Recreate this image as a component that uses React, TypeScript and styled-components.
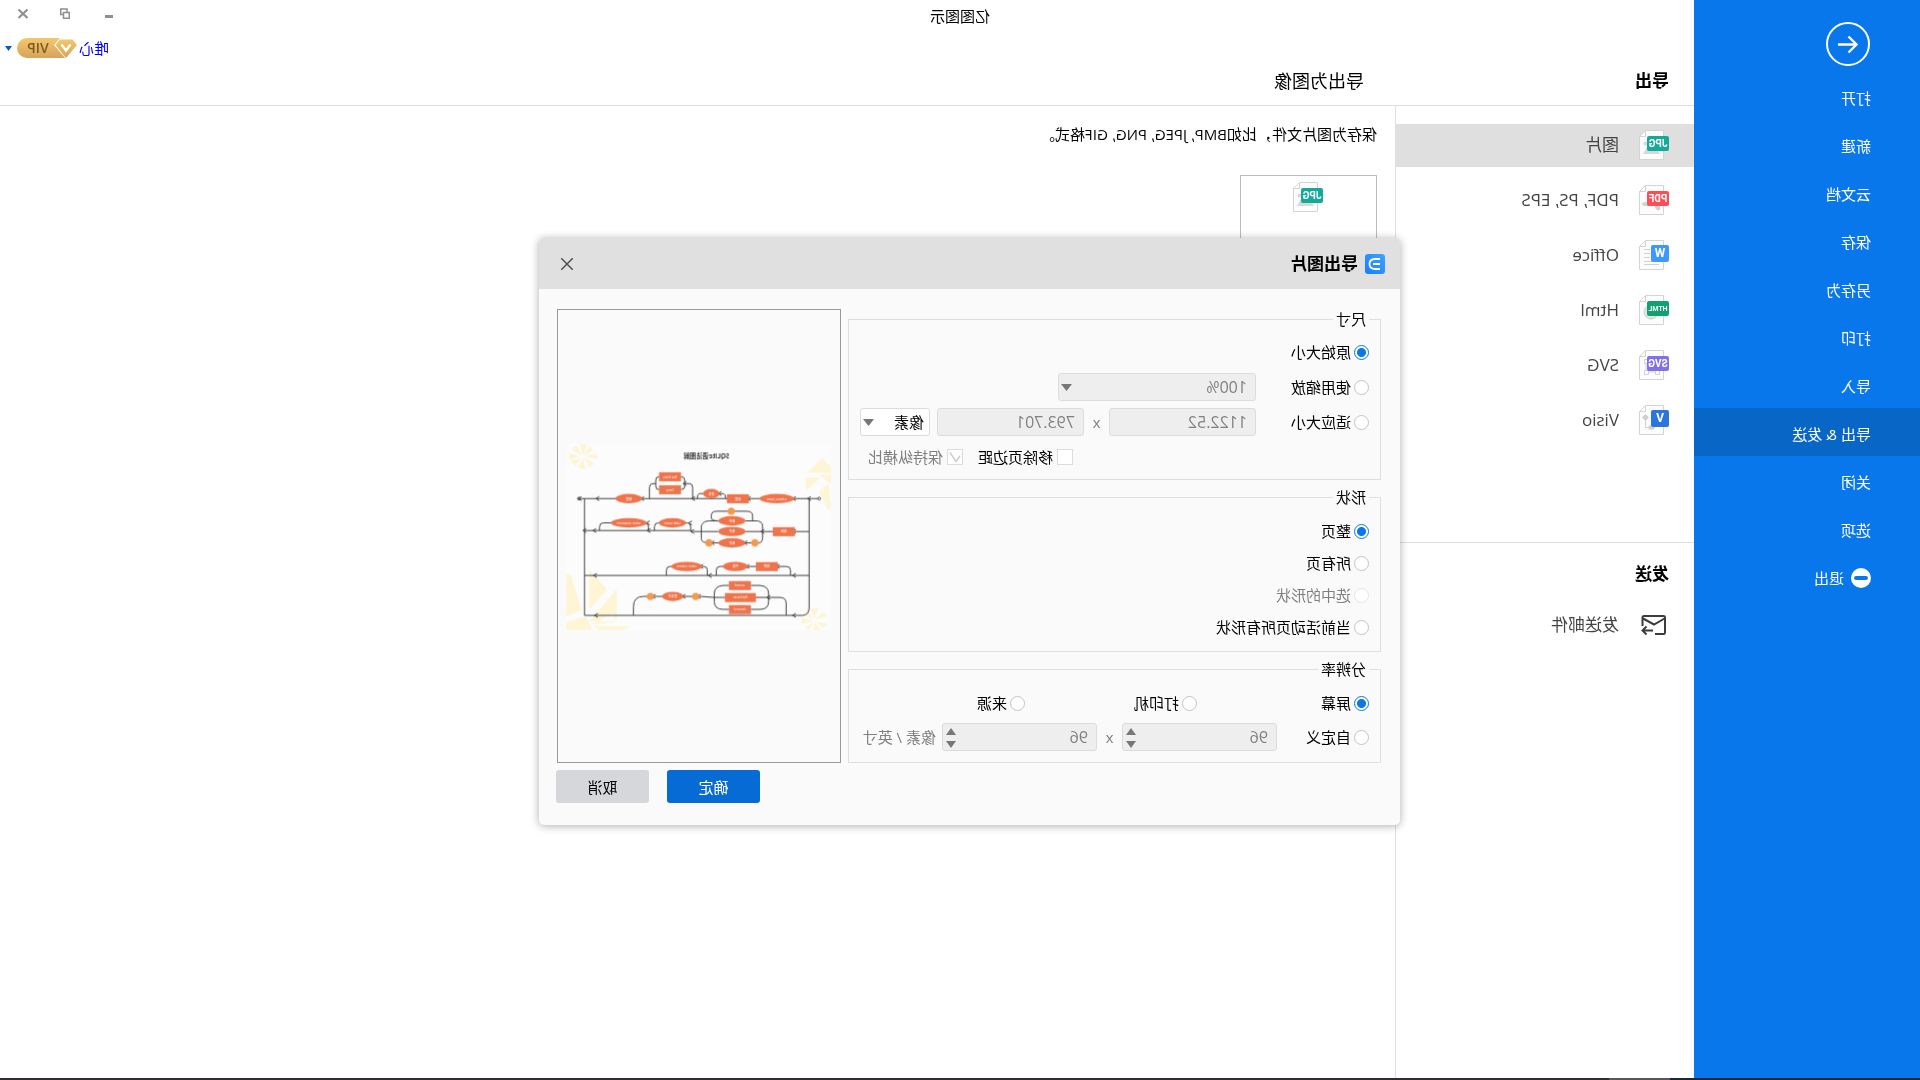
import React from "react";
import styled, { createGlobalStyle, css } from "styled-components";

const GlobalStyle = createGlobalStyle`
  *, *::before, *::after { box-sizing: border-box; }
  body {
    margin: 0;
    background: #ffffff;
    overflow: hidden;
    font-family: "Open Sans", "Noto Sans CJK SC", sans-serif;
    font-size: 15px;
    color: #000000;
  }
  button, input, select { font: inherit; color: inherit; margin: 0; }
`;

const Window = styled.div`
  position: relative;
  display: flex;
  flex-direction: column;
  min-height: 100vh;
  transform: scaleX(-1);
`;

const Workspace = styled.div`
  flex: 1;
  display: flex;
`;

/* ---------- sidebar ---------- */

const Sidebar = styled.nav`
  flex: 0 0 226px;
  background: #0977ec;
  color: #ffffff;
`;

const BackButton = styled.button`
  display: block;
  margin: 22px 0 6px 50px;
  width: 44px;
  height: 44px;
  padding: 0;
  border: 0;
  background: none;
`;

const MenuItem = styled.button<{ $active?: boolean }>`
  display: flex;
  align-items: center;
  gap: 7px;
  width: 100%;
  height: 48px;
  padding: 4px 0 0 49px;
  border: 0;
  background: ${(p) => (p.$active ? "#0866c6" : "transparent")};
  text-align: left;
  line-height: 20px;
`;

/* ---------- header ---------- */

const Content = styled.div`
  flex: 1;
  min-width: 0;
  display: flex;
  flex-direction: column;
`;

const Header = styled.header`
  border-bottom: 1px solid #dfdfdf;
`;

const TitleBar = styled.div`
  display: flex;
  align-items: center;
  height: 32px;
  padding-left: calc(50vw - 256px);
  padding-right: 18px;
  padding-bottom: 2px;
`;

const WindowControls = styled.div`
  display: flex;
  gap: 32px;
  margin-left: auto;
  padding-bottom: 4px;
`;

const IconButton = styled.button`
  display: flex;
  padding: 0;
  border: 0;
  background: none;
`;

const AccountBar = styled.div`
  display: flex;
  align-items: center;
  justify-content: flex-end;
  gap: 2px;
  height: 32px;
  padding-right: 5px;
`;

const AccountLink = styled.a`
  color: #0000ff;
  text-decoration: none;
  line-height: 20px;
`;

const DropButton = styled(IconButton)`
  margin-left: 3px;
`;

const Headings = styled.div`
  display: flex;
  align-items: center;
  height: 41px;
  padding-bottom: 8px;
`;

const SectionTitle = styled.h2`
  margin: 0;
  padding-left: 25px;
  font-size: 17px;
  font-weight: 700;
  line-height: 26px;
`;

const HeadingSlot = styled.div`
  flex: 0 0 330px;
`;

const PageTitle = styled.h1`
  margin: 0;
  font-size: 18px;
  font-weight: 400;
  line-height: 26px;
`;

/* ---------- export list ---------- */

const Columns = styled.div`
  flex: 1;
  display: flex;
`;

const ExportNav = styled.div`
  flex: 0 0 299px;
  padding-top: 18px;
  border-right: 1px solid #dfdfdf;
`;

const FormatList = styled.div`
  display: flex;
  flex-direction: column;
  gap: 12px;
`;

const FormatItem = styled.button<{ $active?: boolean }>`
  display: flex;
  align-items: center;
  gap: 20px;
  width: 100%;
  height: 43px;
  padding: 0 0 1px 25px;
  border: 0;
  background: ${(p) => (p.$active ? "#dfdfdf" : "transparent")};
  color: #444444;
  font-size: 17px;
  line-height: 24px;
`;

const SendSection = styled.section`
  display: flex;
  flex-direction: column;
  gap: 17px;
  margin-top: 100px;
  padding-top: 18px;
  border-top: 1px solid #dfdfdf;
`;

const Main = styled.main`
  flex: 1;
  padding: 17px 18px;
`;

const Description = styled.p`
  margin: 0 0 30px;
  line-height: 22px;
`;

const FormatCard = styled.button`
  display: flex;
  flex-direction: column;
  align-items: center;
  width: 137px;
  height: 137px;
  padding: 6px 0;
  border: 1px solid #bbbbbb;
  background: #ffffff;
`;

/* ---------- dialog ---------- */

const Overlay = styled.div`
  position: absolute;
  inset: 0;
  display: flex;
  align-items: center;
  justify-content: center;
  padding: 0 19px 17px 0;
`;

const Dialog = styled.section`
  width: 861px;
  border-radius: 5px;
  overflow: hidden;
  background: #fafafa;
  box-shadow: 0 1px 8px rgba(0, 0, 0, 0.32);
`;

const DialogHeader = styled.header`
  display: flex;
  align-items: center;
  gap: 7px;
  height: 51px;
  padding: 0 22px 0 15px;
  background: #e0e0e0;
`;

const DialogTitle = styled.h2`
  margin: 0 auto 0 0;
  font-size: 17px;
  line-height: 24px;
`;

const DialogBody = styled.div`
  display: flex;
  gap: 7px;
  padding: 20px 18px 7px 19px;
`;

const Settings = styled.form`
  flex: 1;
  min-width: 0;
  display: flex;
  flex-direction: column;
  gap: 7px;
`;

const Group = styled.fieldset<{ $gap: number; $top: number; $bottom: number }>`
  margin: 0;
  padding: ${(p) => p.$top}px 11px ${(p) => p.$bottom}px;
  border: 1px solid #dfdfdf;
  min-width: 0;

  & > div + div { margin-top: ${(p) => p.$gap}px; }
`;

const Legend = styled.legend`
  padding: 0 3px;
  line-height: 20px;
`;

const Row = styled.div`
  display: flex;
  align-items: center;
  height: 28px;
`;

const Choice = styled.label<{ $width?: number; $muted?: boolean }>`
  display: flex;
  align-items: center;
  gap: 3px;
  flex: 0 0 ${(p) => (p.$width ? p.$width + "px" : "auto")};
  color: ${(p) => (p.$muted ? "#808080" : "#000000")};
  line-height: 20px;
  white-space: nowrap;
`;

const Radio = styled.input`
  appearance: none;
  width: 15px;
  height: 15px;
  border: 1px solid #c4c4c4;
  border-radius: 50%;
  background: #ffffff;

  &:checked {
    border-color: #0977ec;
    background: radial-gradient(circle, #0977ec 4px, #ffffff 5px);
  }
  &:disabled { border-color: #e4e4e4; }
`;

const CheckRow = styled(Row)`
  gap: 15px;
  padding-left: 296px;
`;

const CheckBox = styled.input`
  appearance: none;
  width: 16px;
  height: 16px;
  border: 1px solid #dcdcdf;
  background: #ffffff;
`;

const CheckSlot = styled.span`
  position: relative;
  display: flex;
  margin-right: 1px;

  & svg { position: absolute; left: 2px; top: 2px; pointer-events: none; }
`;

const field = css`
  width: 100%;
  height: 28px;
  padding: 0 8px;
  border: 1px solid #dcdcdf;
  border-radius: 3px;
  appearance: none;
  background: #eeeeee;
  color: #808080;
  font-size: 16px;
  opacity: 1;
  outline: none;
`;

const TextField = styled.input`
  ${field}
`;

const SelectField = styled.select<{ $white?: boolean }>`
  ${field}
  ${(p) => p.$white && "background: #ffffff; color: #000000; padding: 0 5px; font-size: 15px;"}
`;

const FieldSlot = styled.div<{ $width: number }>`
  position: relative;
  display: flex;
  flex: 0 0 ${(p) => p.$width}px;
`;

const Caret = styled.span`
  position: absolute;
  right: 3px;
  top: 11px;
  display: flex;
  pointer-events: none;
`;

const Steppers = styled.div`
  position: absolute;
  right: 4px;
  top: 5px;
  display: flex;
  flex-direction: column;
  gap: 6px;
`;

const Times = styled.span`
  flex: 0 0 25px;
  text-align: center;
  color: #808080;
  line-height: 20px;
`;

const UnitSlot = styled(FieldSlot)`
  margin-left: 7px;
`;

const UnitText = styled.span`
  margin-left: 6px;
  color: #808080;
  line-height: 20px;
  white-space: nowrap;
`;

const Preview = styled.div`
  flex: 0 0 284px;
  display: flex;
  align-items: center;
  justify-content: center;
  border: 1px solid #999999;
`;

const DialogFooter = styled.footer`
  display: flex;
  justify-content: flex-end;
  gap: 18px;
  padding: 0 17px 22px;
`;

const ActionButton = styled.button<{ $primary?: boolean }>`
  width: 93px;
  height: 33px;
  padding: 0;
  border: 0;
  border-radius: 3px;
  background: ${(p) => (p.$primary ? "#066bd5" : "#d5d7db")};
  color: ${(p) => (p.$primary ? "#ffffff" : "#000000")};
`;

const TaskStrip = styled.div`
  display: grid;
  grid-template-columns: 250px 61px 1fr;
  height: 2px;
  background: #302e30;

  & span:first-child { background: #1c2a36; }
  & span:nth-child(2) { background: #5a5658; }
`;

/* ---------- drawings ---------- */

type Kind = "JPG" | "PDF" | "W" | "HTML" | "SVG" | "V";

const badgeColor: Record<Kind, string> = {
  JPG: "#12ab9b",
  PDF: "#ff4d55",
  W: "#3f98ff",
  HTML: "#11a170",
  SVG: "#8370e8",
  V: "#2b76dc",
};

function FileIcon({ kind }: { kind: Kind }) {
  const single = kind.length === 1;
  return (
    <svg width="30" height="30" viewBox="0 0 30 30" aria-hidden="true">
      <path d="M5.5 .5H23.5L29.5 6.5V29.5H5.5Z" fill="#fcfcfc" stroke="#d4d4d4" />
      <path d="M23.5 .5V6.5H29.5" fill="none" stroke="#d4d4d4" />
      {kind === "JPG" && (
        <g fill="#d8d8d8">
          <path d="M9 24L15 15L19 20L22 17L26 24Z" />
          <circle cx="23.500" cy="13.500" r="2" />
        </g>
      )}
      {kind === "PDF" && (
        <g fill="#d2d2d2">
          <ellipse cx="11.500" cy="22" rx="2.500" ry="3.500" transform="rotate(30 11.500 22)" />
          <ellipse cx="23.500" cy="19" rx="3.500" ry="2" />
        </g>
      )}
      {kind === "W" && (
        <path d="M19 9.500H25M19 13.500H25M19 17.500H25M10 21.500H25M10 24.500H25" stroke="#d0d0d0" fill="none" />
      )}
      {kind === "HTML" && <circle cx="18" cy="17" r="7" fill="#e4e4e4" stroke="#cfcfcf" />}
      {kind === "SVG" && (
        <g fill="#fcfcfc" stroke="#d0d0d0">
          <path d="M11 11H23V22H11Z" />
          <path d="M9.500 20.500h4v4h-4zM20.500 20.500h4v4h-4zM20.500 9.500h4v4h-4z" />
        </g>
      )}
      {kind === "V" && (
        <g stroke="#d0d0d0" fill="#d0d0d0">
          <path d="M23.500 13V22.500H16" fill="none" />
          <path d="M23.500 9.500L26.500 12.500L23.500 15.500L20.500 12.500ZM15 21h5v3h-5z" />
        </g>
      )}
      <rect x="0" y={single ? 5 : 6} width={single ? 18 : 22} height={single ? 17 : 15} rx="2" fill={badgeColor[kind]} />
      <text
        x={single ? 9 : 11}
        y={kind === "HTML" ? 16 : 17}
        fill="#ffffff"
        fontFamily="Roboto, sans-serif"
        fontWeight="700"
        fontSize={single ? 12 : kind === "HTML" ? 7 : 10}
        textAnchor="middle"
      >
        {kind}
      </text>
    </svg>
  );
}

function MailIcon() {
  return (
    <svg width="30" height="22" viewBox="0 0 30 22" fill="none" stroke="#3c3c3c" strokeWidth="2" aria-hidden="true">
      <path d="M14 20H5.500Q4 20 4 18.500V3.500Q4 2 5.500 2H25Q26.500 2 26.500 3.500V12" />
      <path d="M4.500 4.500L15 10.500L26 4.500" />
      <path d="M16 16.500H26M22.500 12.500L26.500 16.500L22.500 20.500" />
    </svg>
  );
}

function Triangle({ up, color = "#777777", size = 11 }: { up?: boolean; color?: string; size?: number }) {
  return (
    <svg width={size} height={size > 8 ? 7 : 5} viewBox="0 0 11 7" preserveAspectRatio="none" aria-hidden="true">
      <path d={up ? "M5.500 0L11 7H0Z" : "M0 0H11L5.500 7Z"} fill={color} />
    </svg>
  );
}

function VipBadge() {
  return (
    <svg width="60" height="20" viewBox="0 0 60 20" role="img" aria-label="VIP">
      <defs>
        <linearGradient id="gold" x1="0" y1="0" x2="0" y2="1">
          <stop offset="0" stopColor="#f3c86c" />
          <stop offset="1" stopColor="#d7a35a" />
        </linearGradient>
      </defs>
      <path d="M12 0H50A10 10 0 0 1 50 20H12Z" fill="url(#gold)" />
      <path d="M5 0H17L23 7L11.500 20.500L-1 7Z" fill="#ffffff" />
      <path d="M4.500 1.500H17L21.500 7L11 20L0 7Z" fill="url(#gold)" />
      <path d="M6.500 6.500L11 12.500L15.500 6.500" fill="none" stroke="#ffffff" strokeWidth="2.400" />
      <text x="39" y="15" textAnchor="middle" fontFamily="Open Sans, sans-serif" fontSize="14" fontWeight="600" fill="#7d5a20">
        VIP
      </text>
    </svg>
  );
}

const ellipses: [number, number, number, string][] = [
  [189, 205, 52, "schema_name"],
  [386, 190, 25, "表名"],
  [634, 205, 40, "触发"],
  [324, 272, 41, "条件"],
  [324, 304, 41, "条件"],
  [324, 338, 41, "条件"],
  [503, 278, 41, "table_name"],
  [634, 278, 54, "select_statement"],
  [314, 409, 37, "列名"],
  [460, 409, 46, "select_column"],
  [502, 499, 32, "表达式"],
];

const boxes: [number, number, number, string][] = [
  [273, 192, 66, "创建"],
  [477, 126, 66, "Not Exists"],
  [477, 165, 66, "Temp"],
  [135, 291, 66, "选择"],
  [186, 396, 66, "排序"],
  [267, 453, 66, "ascend"],
  [252, 489, 93, "Not Exists"],
  [267, 525, 66, "descend"],
];

const dots: [number, number][] = [
  [326, 243],
  [255, 338],
  [393, 338],
  [433, 499],
  [569, 499],
];

const heads: [number, number][] = [
  [92, 205], [137, 205], [273, 205], [361, 190], [440, 205], [466, 160], [593, 205], [728, 205], [781, 205],
  [137, 304], [232, 304], [443, 304], [449, 278], [576, 278], [574, 301], [737, 301], [767, 301], [283, 338], [382, 338],
  [137, 436], [186, 409], [277, 409], [390, 436], [416, 409], [735, 436],
  [137, 556], [214, 502], [423, 499], [469, 499], [559, 499], [732, 556],
];

function Diagram() {
  return (
    <svg width="265" height="187" viewBox="27 38 795 562" role="img" aria-label="流程图预览">
      <rect x="27" y="38" width="795" height="562" fill="#fcfcfc" />
      <g fill="#fdf5d4">
        <path d="M770 76L742 62L752 46ZM772 74L760 42L782 40ZM776 74L790 44L806 56ZM778 78L814 68L814 86ZM776 82L808 92L796 108ZM772 84L786 112L764 118ZM768 82L752 112L738 100ZM766 78L728 86L730 70Z" />
        <path d="M54 83L96 128H27V108ZM27 134L62 134L27 160ZM60 142H102V182ZM34 160L62 184L34 240L27 230Z" />
        <path d="M753 420V538L700 478ZM822 430V560L776 540L808 436ZM670 478V574H752ZM684 550L746 584L670 574ZM630 588H740L724 600H652ZM764 560L822 576V600H742Z" />
        <path d="M74 570L40 558L50 546ZM77 566L64 536L86 536ZM82 568L94 540L110 550ZM82 573L116 562L114 582ZM78 576L104 592L92 600ZM74 578L82 600H58ZM72 574L50 594L36 582Z" />
      </g>
      <g fill="none" stroke="#404040" strokeWidth="3">
        <circle cx="62" cy="205" r="4" />
        <circle cx="784" cy="205" r="4" />
        <path d="M66 205H780M92 205V535Q94 556 112 556H767V205" />
        <path d="M343 205Q343 190 352 190H420Q428 190 428 205" />
        <path d="M442 205V172Q442 160 452 160H466M477 139Q466 139 466 150V168Q466 178 477 178M543 139Q553 139 553 150V168Q553 178 543 178M553 160H562Q572 160 572 172V205" />
        <path d="M92 304H232L283 304M365 304H440L450 301H767M283 272H248Q232 274 232 288V322Q232 338 243 338H393Q416 338 416 326V288Q412 272 392 272H365" />
        <path d="M262 272V256Q262 243 280 243H370Q386 243 386 256V264Q384 272 365 272" />
        <path d="M448 301V290Q448 278 458 278H546Q557 278 557 290V301M575 301V290Q575 278 586 278H710Q722 278 722 290V301" />
        <path d="M92 436H767M148 436V420Q148 409 160 409H360Q371 409 371 420V436M398 436V420Q398 409 408 409H510Q521 409 521 420V436" />
        <path d="M161 556V520Q161 502 180 502H377L420 499H590Q620 499 620 530V556M267 466H240Q214 468 214 490V515Q214 538 240 538H267M333 466H350Q377 468 377 490V515Q377 538 350 538H333" />
        {heads.map(([x, y], i) => (
          <path key={i} d={`M${x - 5} ${y - 6}L${x + 5} ${y}L${x - 5} ${y + 6}`} />
        ))}
      </g>
      <g fill="#ef744b">
        {ellipses.map(([x, y, r], i) => (
          <ellipse key={i} cx={x} cy={y} rx={r} ry="14" />
        ))}
        {boxes.map(([x, y, w], i) => (
          <rect key={i} x={x} y={y} width={w} height="27" />
        ))}
      </g>
      <g fill="#f59a4c">
        {dots.map(([x, y], i) => (
          <circle key={i} cx={x} cy={y} r="11" />
        ))}
      </g>
      <g fill="#ffffff" fontSize="9" textAnchor="middle">
        {ellipses.map(([x, y, , t], i) => (
          <text key={i} x={x} y={y + 4}>{t}</text>
        ))}
        {boxes.map(([x, y, w, t], i) => (
          <text key={i} x={x + w / 2} y={y + 17}>{t}</text>
        ))}
      </g>
      <text x="401" y="83" textAnchor="middle" fontSize="19" fontWeight="700" fill="#333333">SQLite语法图解</text>
    </svg>
  );
}

/* ---------- page ---------- */

const menu = ["打开", "新建", "云文档", "保存", "另存为", "打印", "导入", "导出 & 发送", "关闭", "选项"];

const formats: [Kind, string][] = [
  ["JPG", "图片"],
  ["PDF", "PDF, PS, EPS"],
  ["W", "Office"],
  ["HTML", "Html"],
  ["SVG", "SVG"],
  ["V", "Visio"],
];

function RadioChoice(props: { name: string; label: string; width?: number; checked?: boolean; disabled?: boolean }) {
  return (
    <Choice $width={props.width} $muted={props.disabled}>
      <Radio type="radio" name={props.name} defaultChecked={props.checked} disabled={props.disabled} />
      {props.label}
    </Choice>
  );
}

function Spin({ label }: { label: string }) {
  return (
    <FieldSlot $width={155}>
      <TextField aria-label={label} defaultValue="96" disabled />
      <Steppers>
        <IconButton type="button" aria-label="增加" disabled><Triangle up size={10} /></IconButton>
        <IconButton type="button" aria-label="减少" disabled><Triangle size={10} /></IconButton>
      </Steppers>
    </FieldSlot>
  );
}

export default function App() {
  return (
    <>
      <GlobalStyle />
      <Window>
        <Workspace>
          <Sidebar>
            <BackButton aria-label="返回">
              <svg width="44" height="44" viewBox="0 0 44 44" fill="none" stroke="#ffffff">
                <circle cx="22" cy="22" r="21" strokeWidth="2" />
                <path d="M32 22.500H13M21.500 14.500L13.500 22.500L21.500 30.500" strokeWidth="2.400" />
              </svg>
            </BackButton>
            {menu.map((m) => (
              <MenuItem key={m} $active={m === "导出 & 发送"}>{m}</MenuItem>
            ))}
            <MenuItem>
              <svg width="20" height="20" viewBox="0 0 20 20" aria-hidden="true">
                <circle cx="10" cy="10" r="10" fill="#ffffff" />
                <rect x="3" y="8" width="14" height="4" rx="2" fill="#0977ec" />
              </svg>
              退出
            </MenuItem>
          </Sidebar>

          <Content>
            <Header>
              <TitleBar>
                <span>亿图图示</span>
                <WindowControls>
                  <IconButton aria-label="最小化">
                    <svg width="11" height="11" viewBox="0 0 11 11"><path d="M0 7h8v3H0z" fill="#8f8f8f" /></svg>
                  </IconButton>
                  <IconButton aria-label="还原">
                    <svg width="10" height="11" viewBox="0 0 10 11" fill="none" stroke="#8f8f8f" strokeWidth="1.500">
                      <path d="M3 4V1H9.250V6.500H7" />
                      <path d="M.75 4.500H6.500V10.250H.75Z" />
                    </svg>
                  </IconButton>
                  <IconButton aria-label="关闭窗口">
                    <svg width="10" height="11" viewBox="0 0 10 11"><path d="M.5 1.500L9.500 10M9.500 1.500L.5 10" stroke="#8f8f8f" strokeWidth="2" /></svg>
                  </IconButton>
                </WindowControls>
              </TitleBar>
              <AccountBar>
                <AccountLink href="#account">唯心</AccountLink>
                <VipBadge />
                <DropButton aria-label="账户菜单"><Triangle color="#0b5cb8" size={7} /></DropButton>
              </AccountBar>
              <Headings>
                <HeadingSlot><SectionTitle>导出</SectionTitle></HeadingSlot>
                <PageTitle>导出为图像</PageTitle>
              </Headings>
            </Header>

            <Columns>
              <ExportNav>
                <FormatList>
                  {formats.map(([k, t]) => (
                    <FormatItem key={k} $active={k === "JPG"}>
                      <FileIcon kind={k} />
                      {t}
                    </FormatItem>
                  ))}
                </FormatList>
                <SendSection>
                  <SectionTitle>发送</SectionTitle>
                  <FormatItem>
                    <MailIcon />
                    发送邮件
                  </FormatItem>
                </SendSection>
              </ExportNav>
              <Main>
                <Description>保存为图片文件，比如BMP, JPEG, PNG, GIF格式。</Description>
                <FormatCard aria-label="导出图片">
                  <FileIcon kind="JPG" />
                </FormatCard>
              </Main>
            </Columns>
          </Content>
        </Workspace>
        <TaskStrip><span /><span /></TaskStrip>

        <Overlay>
          <Dialog role="dialog" aria-label="导出图片">
            <DialogHeader>
              <svg width="20" height="20" viewBox="0 0 20 20" aria-hidden="true">
                <defs>
                  <linearGradient id="logo" x1="0" y1="0" x2="1" y2="1">
                    <stop offset="0" stopColor="#3aa5ff" />
                    <stop offset="1" stopColor="#1a7cff" />
                  </linearGradient>
                </defs>
                <rect width="20" height="20" rx="3" fill="url(#logo)" />
                <path d="M5 5H10.500Q15.500 5.500 15.500 10T10.500 15H5M5 10H12" fill="none" stroke="#ffffff" strokeWidth="1.800" />
              </svg>
              <DialogTitle>导出图片</DialogTitle>
              <IconButton aria-label="关闭">
                <svg width="12" height="12" viewBox="0 0 12 12"><path d="M0 0L12 12M12 0L0 12" stroke="#505050" strokeWidth="1.500" /></svg>
              </IconButton>
            </DialogHeader>
            <DialogBody>
              <Settings>
                <Group $gap={7} $top={9} $bottom={8}>
                  <Legend>尺寸</Legend>
                  <Row><RadioChoice name="size" label="原始大小" checked /></Row>
                  <Row>
                    <RadioChoice name="size" label="使用缩放" width={113} />
                    <FieldSlot $width={198}>
                      <SelectField aria-label="缩放比例" disabled><option>100%</option></SelectField>
                      <Caret><Triangle /></Caret>
                    </FieldSlot>
                  </Row>
                  <Row>
                    <RadioChoice name="size" label="适应大小" width={113} />
                    <FieldSlot $width={147}><TextField aria-label="宽度" defaultValue="1122.52" disabled /></FieldSlot>
                    <Times>x</Times>
                    <FieldSlot $width={147}><TextField aria-label="高度" defaultValue="793.701" disabled /></FieldSlot>
                    <UnitSlot $width={70}>
                      <SelectField aria-label="单位" $white><option>像素</option></SelectField>
                      <Caret><Triangle /></Caret>
                    </UnitSlot>
                  </Row>
                  <CheckRow>
                    <Choice>
                      <CheckSlot><CheckBox type="checkbox" /></CheckSlot>
                      移除页边距
                    </Choice>
                    <Choice $muted>
                      <CheckSlot>
                        <CheckBox type="checkbox" defaultChecked disabled />
                        <svg width="12" height="12" viewBox="0 0 12 12"><path d="M1 5L5 10.500L11 1.500" fill="none" stroke="#cccccc" strokeWidth="1.500" /></svg>
                      </CheckSlot>
                      保持纵横比
                    </Choice>
                  </CheckRow>
                </Group>
                <Group $gap={4} $top={10} $bottom={10}>
                  <Legend>形状</Legend>
                  <Row><RadioChoice name="shape" label="整页" checked /></Row>
                  <Row><RadioChoice name="shape" label="所有页" /></Row>
                  <Row><RadioChoice name="shape" label="选中的形状" disabled /></Row>
                  <Row><RadioChoice name="shape" label="当前活动页所有形状" /></Row>
                </Group>
                <Group $gap={6} $top={10} $bottom={11}>
                  <Legend>分辨率</Legend>
                  <Row>
                    <RadioChoice name="dpi" label="屏幕" width={172} checked />
                    <RadioChoice name="dpi" label="打印机" width={172} />
                    <RadioChoice name="dpi" label="来源" />
                  </Row>
                  <Row>
                    <RadioChoice name="dpi" label="自定义" width={92} />
                    <Spin label="水平分辨率" />
                    <Times>x</Times>
                    <Spin label="垂直分辨率" />
                    <UnitText>像素 / 英寸</UnitText>
                  </Row>
                </Group>
              </Settings>
              <Preview><Diagram /></Preview>
            </DialogBody>
            <DialogFooter>
              <ActionButton $primary>确定</ActionButton>
              <ActionButton>取消</ActionButton>
            </DialogFooter>
          </Dialog>
        </Overlay>
      </Window>
    </>
  );
}
